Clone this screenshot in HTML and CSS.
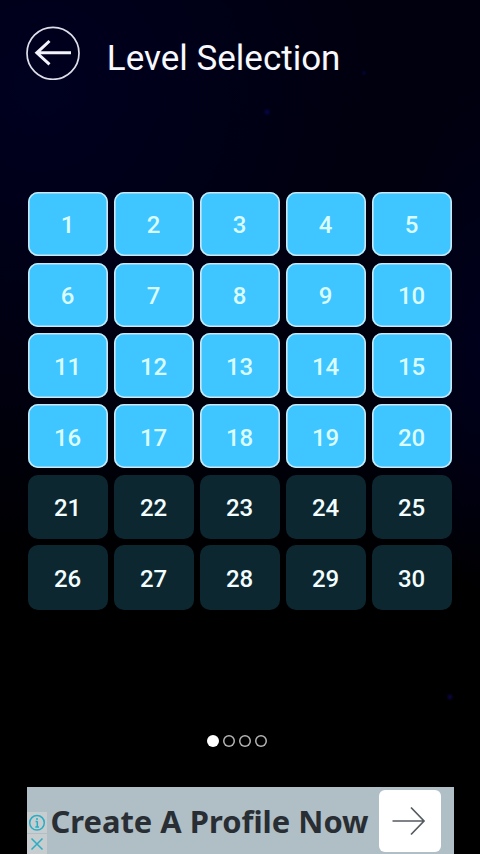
FILE: index.html
```html
<!DOCTYPE html>
<html lang="en">
<head>
<meta charset="utf-8">
<title>Level Selection</title>
<link rel="stylesheet" href="styles.css">
</head>
<body>
<main class="screen">
  <header class="header">
    <svg class="back" viewBox="0 0 54 54" role="img" aria-label="Back">
      <circle cx="27" cy="27.3" r="26" fill="none" stroke="#dedeea" stroke-width="1.7"/>
      <path d="M45 26.8H11M23.5 15L10.8 26.8L23.5 38.3" fill="none" stroke="#f3f3fc" stroke-width="3"/>
    </svg>
    <h1 class="title">Level Selection</h1>
  </header>
  <section class="levels">
    <div class="level open">1</div><div class="level open">2</div><div class="level open">3</div><div class="level open">4</div><div class="level open">5</div>
    <div class="level open">6</div><div class="level open">7</div><div class="level open">8</div><div class="level open">9</div><div class="level open">10</div>
    <div class="level open">11</div><div class="level open">12</div><div class="level open">13</div><div class="level open">14</div><div class="level open">15</div>
    <div class="level open">16</div><div class="level open">17</div><div class="level open">18</div><div class="level open">19</div><div class="level open">20</div>
    <div class="level">21</div><div class="level">22</div><div class="level">23</div><div class="level">24</div><div class="level">25</div>
    <div class="level">26</div><div class="level">27</div><div class="level">28</div><div class="level">29</div><div class="level">30</div>
  </section>
  <nav class="pager">
    <span class="dot active"></span><span class="dot"></span><span class="dot"></span><span class="dot"></span>
  </nav>
  <aside class="ad">
    <div class="ad-controls">
      <svg class="ad-icon info" viewBox="0 0 20 21">
        <circle cx="10" cy="10.8" r="7.3"/>
        <path d="M10.3 9.3V15M8.6 9.6H10.3M8.3 15H12M10 6V8"/>
      </svg>
      <svg class="ad-icon close" viewBox="0 0 20 20">
        <path d="M4.5 4.5L15.5 15.5M15.5 4.5L4.5 15.5"/>
      </svg>
    </div>
    <div class="ad-text">Create A Profile Now</div>
    <div class="ad-button">
      <svg class="ad-arrow" viewBox="0 0 62 62">
        <path d="M13.5 31H45M32 17.5L45 31L32 44.5" fill="none" stroke="#565b60" stroke-width="1.7"/>
      </svg>
    </div>
  </aside>
</main>
</body>
</html>
```
FILE: styles.css
```css
* {
  box-sizing: border-box;
}

body {
  margin: 0;
  background: #000;
}

.screen {
  display: flex;
  flex-direction: column;
  width: 480px;
  height: 854px;
  overflow: hidden;
  font-family: Roboto, "Liberation Sans", sans-serif;
  background:
    radial-gradient(circle at 267px 112px, #05054e 0, transparent 4px),
    radial-gradient(circle at 364px 73px, #04043a 0, transparent 3px),
    radial-gradient(circle at 450px 697px, #0b0648 0, transparent 4px),
    radial-gradient(ellipse 90px 260px at 480px 340px, #00001c, transparent),
    radial-gradient(ellipse 330px 330px at 40px 90px, #000020, transparent),
    linear-gradient(#00000f 0, #00000d 400px, #000 580px);
}

.header {
  display: flex;
  align-items: flex-start;
  height: 192px;
  padding: 26px 0 0 26px;
}

.back {
  flex: none;
  width: 54px;
  height: 54px;
}

.title {
  margin: 12px 0 0 26.8px;
  color: #f8f8ff;
  font-size: 35px;
  font-weight: 400;
  line-height: 42px;
  white-space: nowrap;
}

.levels {
  display: grid;
  grid-template-columns: repeat(5, 80px);
  grid-auto-rows: 64.4px;
  gap: 6.3px 6px;
  padding-left: 27.5px;
}

.level {
  display: flex;
  align-items: center;
  justify-content: center;
  padding-top: 2.6px;
  border-radius: 10px;
  background: #0d2730;
  color: #f2fdff;
  font-size: 24px;
  font-weight: 500;
  letter-spacing: -0.2px;
}

.open {
  background: #3fc5ff;
  box-shadow: inset 0 0 0 1.6px #c9e8f4;
  color: #d9fcff;
}

.pager {
  display: flex;
  gap: 4px;
  margin-top: 125px;
  padding-left: 207px;
}

.dot {
  width: 12px;
  height: 12px;
  border-radius: 50%;
  box-shadow: inset 0 0 0 1.5px #b5b5b5;
}

.active {
  background: #fff;
  box-shadow: none;
}

.ad {
  display: flex;
  width: 427px;
  height: 67px;
  margin: auto 0 0 26.5px;
  background: #b0bec5;
}

.ad-controls {
  flex: none;
  width: 20px;
  padding-top: 25px;
}

.ad-icon {
  display: block;
  width: 20px;
  height: 21px;
  background: #c7cccf;
  fill: none;
  stroke: #27aec5;
  stroke-width: 1.5;
}

.close {
  margin-top: 1px;
  height: 20px;
}

.ad-text {
  flex: none;
  width: 332px;
  padding-left: 4px;
  color: #282e33;
  font-family: "Noto Sans", "Open Sans", sans-serif;
  font-size: 30.9px;
  font-weight: 700;
  line-height: 69px;
  white-space: nowrap;
}

.ad-button {
  width: 62px;
  height: 62px;
  margin-top: 3px;
  border-radius: 6px;
  background: #fff;
}

.ad-arrow {
  display: block;
}
```
